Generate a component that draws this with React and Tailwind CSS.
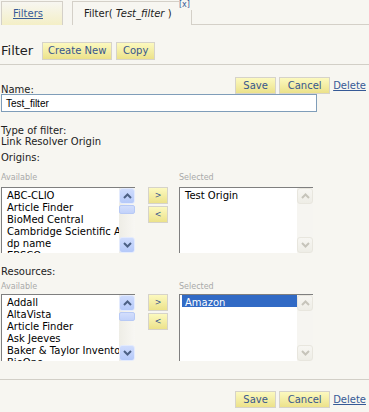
import React from 'react';

const origins = ['ABC-CLIO', 'Article Finder', 'BioMed Central', 'Cambridge Scientific Abstracts', 'dp name', 'EBSCO'];
const resources = ['Addall', 'AltaVista', 'Article Finder', 'Ask Jeeves', 'Baker & Taylor Inventory', 'BioOne'];

const Btn = ({ children, className = '' }) => (
    <button className={`border border-[#d6d3c9] bg-linear-to-b from-[#fcf9bf] to-[#ece28a] leading-none text-[#37568c] ${className}`}>
        {children}
    </button>
);

const Chevron = ({ up, color }) => (
    <svg width="9" height="6" viewBox="0 0 9 6">
        <path d={up ? 'M1 5 L4.5 1.5 L8 5' : 'M1 1 L4.5 4.5 L8 1'} fill="none" stroke={color} strokeWidth="2" />
    </svg>
);

const ScrollArrow = ({ up, disabled }) => (
    <div className={`h-[16px] w-[16px] rounded-[3px] border flex items-center justify-center ${disabled ? 'border-[#e8e6de] bg-linear-to-b from-[#f7f6f2] to-[#eeede6]' : 'border-[#e4ebfd] bg-linear-to-b from-[#cfdcfd] to-[#b5c9f9]'}`}>
        <Chevron up={up} color={disabled ? '#c6c4ba' : '#4d6185'} />
    </div>
);

const Scrollbar = ({ disabled }) => (
    <div className={`w-[16px] h-full flex flex-col shrink-0 ${disabled ? 'bg-[#f6f5f1]' : 'bg-linear-to-r from-[#eeede6] to-[#f8f7f3]'}`}>
        <ScrollArrow up disabled={disabled} />
        {!disabled && <div className="mt-[1px] h-[9px] rounded-[2px] border border-[#b7c9f5] bg-linear-to-b from-[#d3defc] to-[#c2d2fa]" />}
        <div className="flex-1" />
        <ScrollArrow disabled={disabled} />
    </div>
);

const ListBox = ({ items, highlight, disabled, h = 'h-[66px]' }) => (
    <div className={`w-[134px] ${h} flex bg-white border-t border-l border-[#7f7f7f] overflow-hidden`}>
        <div className="flex-1 min-w-0 pl-[2px] overflow-hidden">
            {items.map(item => (
                <div
                    key={item}
                    className={`h-[12px] leading-[16px] pl-[3px] whitespace-nowrap text-[10px] ${item === highlight ? 'bg-[#316ac5] text-white' : 'text-black'}`}
                >
                    {item}
                </div>
            ))}
        </div>
        <Scrollbar disabled={disabled} />
    </div>
);

const Picker = ({ available, selected, highlight, h, labelGap, arrowsTop }) => (
    <div className="flex pl-[1px]">
        <div>
            <div className={`text-[8px] leading-[8px] text-[#a9a9a9] ${labelGap}`}>Available</div>
            <ListBox items={available} h={h} />
        </div>
        <div className={`ml-[13px] mr-[11px] flex flex-col gap-[2px] ${arrowsTop}`}>
            <Btn className="w-[20px] h-[17px] text-[8px]">&gt;</Btn>
            <Btn className="w-[20px] h-[17px] text-[8px]">&lt;</Btn>
        </div>
        <div>
            <div className={`text-[8px] leading-[8px] text-[#a9a9a9] ${labelGap}`}>Selected</div>
            <ListBox items={selected} highlight={highlight} disabled h={h} />
        </div>
    </div>
);

const FormActions = () => (
    <div className="flex items-center gap-[3px]">
        <Btn className="w-[41px] h-[17px] text-[10px]">Save</Btn>
        <Btn className="w-[51px] h-[17px] text-[10px]">Cancel</Btn>
        <a href="#" className="text-[10px] text-[#365a96] underline">Delete</a>
    </div>
);

export default function App() {
    return (
        <div className="w-[369px] h-[412px] overflow-hidden bg-[#f7f6f1] text-[#333] font-['DejaVu_Sans',Verdana,sans-serif]">
            {/* tabs */}
            <div className="relative flex items-start h-[25px] pt-[1px]">
                <div className="ml-[1px] flex h-[24px] w-[62px] items-start border-l border-t border-r border-[#d4d0c8] bg-linear-to-b from-[#f7f6f1] to-[#f4efc6] pl-[11px] pt-[6px]">
                    <a href="#" className="block text-[10px] leading-[12px] text-[#365a96] underline">Filters</a>
                </div>
                <div className="ml-[9px] flex h-[24px] w-[120px] items-start border-l border-t border-r border-[#d4d0c8] pl-[11px] pt-[6px]">
                    <span className="block text-[10px] leading-[12px] text-[#222]">Filter( <i>Test_filter</i> )</span>
                </div>
                <div className="h-[24px] flex-1 border-b border-[#d4d0c8]" />
                <span className="absolute left-[179px] top-0 h-[10px] w-[13px] bg-[#f7f6f1] text-[8px] leading-[10px] text-[#365a96]">[x]</span>
            </div>

            {/* heading */}
            <div className="mt-[17px] flex h-[18px] items-center pl-[1px]">
                <h2 className="text-[13px] font-normal text-[#222]">Filter</h2>
                <Btn className="ml-[9px] w-[70px] h-[18px] text-[10px]">Create New</Btn>
                <Btn className="ml-[4px] w-[39px] h-[18px] text-[10px]">Copy</Btn>
            </div>
            <div className="mt-[4px] h-px bg-[#d2cfc7]" />

            {/* name */}
            <div className="mt-[12px] flex h-[17px] items-end justify-between pl-[1px] pr-[3px]">
                <label className="text-[10px] leading-[8px] text-[#222]">Name:</label>
                <FormActions />
            </div>
            <div className="ml-[1px] flex h-[18px] w-[316px] items-center border border-[#7f9db9] bg-white pl-[4px] text-[10px] text-black font-['Liberation_Sans',Arial,sans-serif]">
                Test_filter
            </div>

            <div className="mt-[13px] pl-[1px] text-[10px] leading-[11px] text-[#222]">
                <div>Type of filter:</div>
                <div>Link Resolver Origin</div>
                <div className="mt-[5px]">Origins:</div>
            </div>
            <div className="mt-[11px]">
                <Picker available={origins} selected={['Test Origin']} h="h-[66px]" labelGap="mb-[5px]" arrowsTop="pt-[13px]" />
            </div>

            <div className="mt-[13px] pl-[1px] text-[10px] leading-[11px] text-[#222]">Resources:</div>
            <div className="mt-[6px]">
                <Picker available={resources} selected={['Amazon']} highlight="Amazon" h="h-[67px]" labelGap="mb-[3px]" arrowsTop="pt-[11px]" />
            </div>

            <div className="mt-[18px] h-px bg-[#d2cfc7]" />
            <div className="mt-[11px] flex justify-end pr-[3px]">
                <FormActions />
            </div>
        </div>
    );
}
